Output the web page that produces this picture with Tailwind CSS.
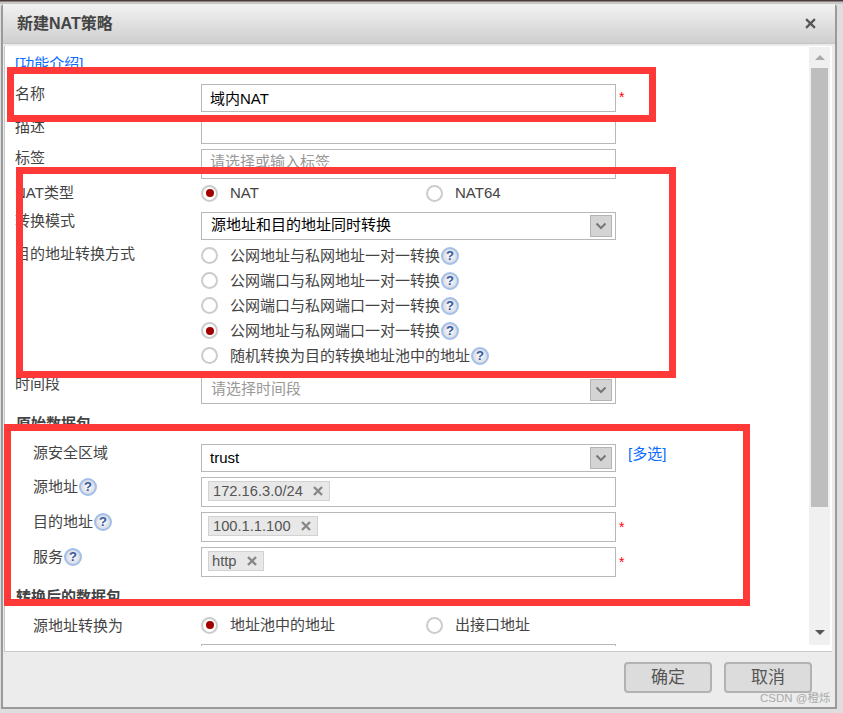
<!DOCTYPE html>
<html lang="zh-CN">
<head>
  <meta charset="UTF-8" />
  <title>新建NAT策略</title>
  <script src="https://cdn.jsdelivr.net/npm/@tailwindcss/browser@4"></script>
</head>
<body class="bg-[#dedede] overflow-hidden font-['Liberation_Sans','Noto_Sans_CJK_SC',sans-serif] text-[15px] text-[#444]">
<svg class="hidden">
  <symbol id="chev" viewBox="0 0 12 8"><path d="M1.5 1.5 6 6l4.5-4.5" fill="none" stroke="#777" stroke-width="2"/></symbol>
  <symbol id="cross" viewBox="0 0 10 10"><path d="M1 1l8 8M9 1l-8 8" fill="none" stroke="#888" stroke-width="2.4"/></symbol>
</svg>

<div class="relative w-[843px] h-[713px] overflow-hidden">
  <div class="h-1 bg-[linear-gradient(#4a3a3a_0,#4a3a3a_1px,#c8c8c8_2px)]"></div>

  <!-- dialog -->
  <div class="ml-px w-[836px] h-[705px] flex flex-col rounded-t bg-[#ececec] border-r-2 border-b-2 border-l-2 border-[#9a9a9a]">
    <div class="h-10 shrink-0 flex items-center justify-between pl-[14px] pr-[19px] bg-gradient-to-b from-[#f2f2f2] to-[#cfcfcf] border-b border-[#c4c4c4]">
      <span class="text-[16px] font-bold">新建NAT策略</span>
      <svg class="size-[11px]" viewBox="0 0 10 10"><path d="M1 1l8 8M9 1l-8 8" fill="none" stroke="#555" stroke-width="2"/></svg>
    </div>

    <!-- panel -->
    <div class="mt-[2px] ml-px w-[828px] h-[606px] flex bg-white border-l border-b border-[#c8c8c8] pr-[2px]">
      <div class="w-[804px] h-[600px] overflow-hidden pl-[10px] leading-5">
        <div class="pt-[8px]"><a class="text-[#0a6cff]">[功能介绍]</a></div>

        <div class="flex mt-[10px]">
          <div class="w-[186px]">名称</div>
          <div class="w-[415px] h-7 border border-[#b8b8b8] flex items-center pl-2 pt-[2px] text-black">域内NAT</div>
          <span class="ml-[3px] mt-[3px] text-[#f00] text-[14px]">*</span>
        </div>
        <div class="flex mt-1">
          <div class="w-[186px] mt-px">描述</div>
          <div class="w-[415px] h-7 border border-[#b8b8b8]"></div>
        </div>
        <div class="flex mt-[5px]">
          <div class="w-[186px] -mt-px">标签</div>
          <div class="w-[415px] h-[30px] border border-[#b8b8b8] flex items-center pl-2 pb-1 text-[#999]">请选择或输入标签</div>
        </div>
        <div class="flex mt-[5px] h-[18px] items-center">
          <div class="w-[186px] -mt-px">NAT类型</div>
          <div class="w-[225px] flex items-center gap-3">
            <span class="size-[17px] rounded-full border-2 border-[#ccc] flex items-center justify-center"><span class="size-2 rounded-full bg-[#a00000]"></span></span>NAT
          </div>
          <div class="flex items-center gap-3">
            <span class="size-[17px] rounded-full border-2 border-[#ccc]"></span>NAT64
          </div>
        </div>
        <div class="flex mt-[10px]">
          <div class="w-[186px] -mt-px">转换模式</div>
          <div class="w-[415px] h-7 border border-[#b8b8b8] flex items-center justify-between pl-[9px] pr-[3px] text-black">
            <span class="-mt-[2px]">源地址和目的地址同时转换</span>
            <span class="w-[22px] h-[22px] bg-[#d4d4d4] border border-[#b4b4b4] flex items-center justify-center"><svg class="w-3 h-2"><use href="#chev"/></svg></span>
          </div>
        </div>
        <div class="flex mt-1">
          <div class="w-[186px]">目的地址转换方式</div>
          <div class="-mt-px mb-px">
            <div class="h-[25px] flex items-center gap-3"><span class="size-[17px] rounded-full border-2 border-[#ccc]"></span><span class="flex items-center">公网地址与私网地址一对一转换<span class="ml-px size-[18px] rounded-full border-2 border-[#a3bfea] bg-[radial-gradient(circle,#fff,#c9ccd6)] text-[#34589f] font-bold text-[13px] flex items-center justify-center">?</span></span></div>
            <div class="h-[25px] flex items-center gap-3"><span class="size-[17px] rounded-full border-2 border-[#ccc]"></span><span class="flex items-center">公网端口与私网地址一对一转换<span class="ml-px size-[18px] rounded-full border-2 border-[#a3bfea] bg-[radial-gradient(circle,#fff,#c9ccd6)] text-[#34589f] font-bold text-[13px] flex items-center justify-center">?</span></span></div>
            <div class="h-[25px] flex items-center gap-3"><span class="size-[17px] rounded-full border-2 border-[#ccc]"></span><span class="flex items-center">公网端口与私网端口一对一转换<span class="ml-px size-[18px] rounded-full border-2 border-[#a3bfea] bg-[radial-gradient(circle,#fff,#c9ccd6)] text-[#34589f] font-bold text-[13px] flex items-center justify-center">?</span></span></div>
            <div class="h-[25px] flex items-center gap-3"><span class="size-[17px] rounded-full border-2 border-[#ccc] flex items-center justify-center"><span class="size-2 rounded-full bg-[#a00000]"></span></span><span class="flex items-center">公网地址与私网端口一对一转换<span class="ml-px size-[18px] rounded-full border-2 border-[#a3bfea] bg-[radial-gradient(circle,#fff,#c9ccd6)] text-[#34589f] font-bold text-[13px] flex items-center justify-center">?</span></span></div>
            <div class="h-[25px] flex items-center gap-3"><span class="size-[17px] rounded-full border-2 border-[#ccc]"></span><span class="flex items-center">随机转换为目的转换地址池中的地址<span class="ml-px size-[18px] rounded-full border-2 border-[#a3bfea] bg-[radial-gradient(circle,#fff,#c9ccd6)] text-[#34589f] font-bold text-[13px] flex items-center justify-center">?</span></span></div>
          </div>
        </div>
        <div class="flex mt-[7px]">
          <div class="w-[186px] -mt-[2px]">时间段</div>
          <div class="w-[415px] h-7 border border-[#b8b8b8] flex items-center justify-between pl-[9px] pr-[3px] text-[#999]">
            <span class="-mt-[2px]">请选择时间段</span>
            <span class="w-[22px] h-[22px] bg-[#d4d4d4] border border-[#b4b4b4] flex items-center justify-center"><svg class="w-3 h-2"><use href="#chev"/></svg></span>
          </div>
        </div>

        <div class="mt-[10px] pl-px font-bold">原始数据包</div>
        <div class="flex mt-[10px]">
          <div class="w-[186px] pl-[18px] -mt-px">源安全区域</div>
          <div class="w-[415px] h-7 border border-[#b8b8b8] flex items-center justify-between pl-2 pr-[3px] text-black">
            trust
            <span class="w-[22px] h-[22px] bg-[#d4d4d4] border border-[#b4b4b4] flex items-center justify-center"><svg class="w-3 h-2"><use href="#chev"/></svg></span>
          </div>
          <a class="ml-3 text-[#0a6cff]">[多选]</a>
        </div>
        <div class="flex mt-[5px]">
          <div class="w-[186px] pl-[18px] flex items-center h-5">源地址<span class="ml-px size-[18px] rounded-full border-2 border-[#a3bfea] bg-[radial-gradient(circle,#fff,#c9ccd6)] text-[#34589f] font-bold text-[13px] flex items-center justify-center">?</span></div>
          <div class="w-[415px] h-[30px] border border-[#b8b8b8] flex items-center pl-[6px] pb-[2px]">
            <span class="h-5 flex items-center gap-[10px] bg-[#e8e8e8] border border-[#d2d2d2] pl-1 pr-[6px] text-[14.7px] text-[#555]">172.16.3.0/24<svg class="size-[10px]"><use href="#cross"/></svg></span>
          </div>
        </div>
        <div class="flex mt-[5px]">
          <div class="w-[186px] pl-[18px] flex items-center h-5">目的地址<span class="ml-px size-[18px] rounded-full border-2 border-[#a3bfea] bg-[radial-gradient(circle,#fff,#c9ccd6)] text-[#34589f] font-bold text-[13px] flex items-center justify-center">?</span></div>
          <div class="w-[415px] h-[30px] border border-[#b8b8b8] flex items-center pl-[6px] pb-[2px]">
            <span class="h-5 flex items-center gap-[10px] bg-[#e8e8e8] border border-[#d2d2d2] pl-1 pr-[6px] text-[14.7px] text-[#555]">100.1.1.100<svg class="size-[10px]"><use href="#cross"/></svg></span>
          </div>
          <span class="ml-[3px] mt-[5px] text-[#f00] text-[14px]">*</span>
        </div>
        <div class="flex mt-[5px]">
          <div class="w-[186px] pl-[18px] flex items-center h-5">服务<span class="ml-px size-[18px] rounded-full border-2 border-[#a3bfea] bg-[radial-gradient(circle,#fff,#c9ccd6)] text-[#34589f] font-bold text-[13px] flex items-center justify-center">?</span></div>
          <div class="w-[415px] h-[30px] border border-[#b8b8b8] flex items-center pl-[6px] pb-[2px]">
            <span class="h-5 flex items-center gap-[10px] bg-[#e8e8e8] border border-[#d2d2d2] pl-[3px] pr-[6px] text-[14.7px] text-[#555]">http<svg class="size-[10px]"><use href="#cross"/></svg></span>
          </div>
          <span class="ml-[3px] mt-[5px] text-[#f00] text-[14px]">*</span>
        </div>

        <div class="mt-[10px] pl-px font-bold">转换后的数据包</div>
        <div class="flex mt-[9px] h-[18px] items-center">
          <div class="w-[186px] pl-[18px] mt-px">源地址转换为</div>
          <div class="w-[225px] flex items-center gap-3">
            <span class="size-[17px] rounded-full border-2 border-[#ccc] flex items-center justify-center"><span class="size-2 rounded-full bg-[#a00000]"></span></span>地址池中的地址
          </div>
          <div class="flex items-center gap-3">
            <span class="size-[17px] rounded-full border-2 border-[#ccc]"></span>出接口地址
          </div>
        </div>
        <div class="ml-[186px] mt-[10px] w-[415px] h-7 border border-[#b8b8b8]"></div>
      </div>

      <!-- scrollbar -->
      <div class="w-[21px] h-[598px] mt-px bg-[#f0f0f0] flex flex-col items-center">
        <div class="h-[21px] flex items-center justify-center"><span class="border-x-[5px] border-x-transparent border-b-[5px] border-b-[#aaa]"></span></div>
        <div class="w-[17px] h-[439px] bg-[#bebebe]"></div>
        <div class="flex-1 w-full flex items-end justify-center pb-[10px]"><span class="border-x-[5px] border-x-transparent border-t-[5px] border-t-[#555]"></span></div>
      </div>
    </div>

    <div class="flex-1 flex justify-end items-start gap-3 pt-[10px] pr-[23px]">
      <button class="w-[88px] h-[31px] bg-[#dcdcdc] border-2 border-[#b2b2b2] rounded-sm text-[17px] text-[#555]">确定</button>
      <button class="w-[88px] h-[31px] bg-[#dcdcdc] border-2 border-[#b2b2b2] rounded-sm text-[17px] text-[#555]">取消</button>
    </div>
  </div>

  <!-- red annotation boxes -->
  <div class="absolute left-[7px] top-[67px] w-[649px] h-[55px] border-[7px] border-[#ff3838]"></div>
  <div class="absolute left-[16px] top-[167px] w-[660px] h-[211px] border-[7px] border-[#ff3838]"></div>
  <div class="absolute left-[4px] top-[424px] w-[746px] h-[182px] border-[7px] border-[#ff3838]"></div>

  <div class="absolute left-[760px] top-[690px] text-[11.5px] text-[#aaa]">CSDN @橙烁</div>
</div>
</body>
</html>
